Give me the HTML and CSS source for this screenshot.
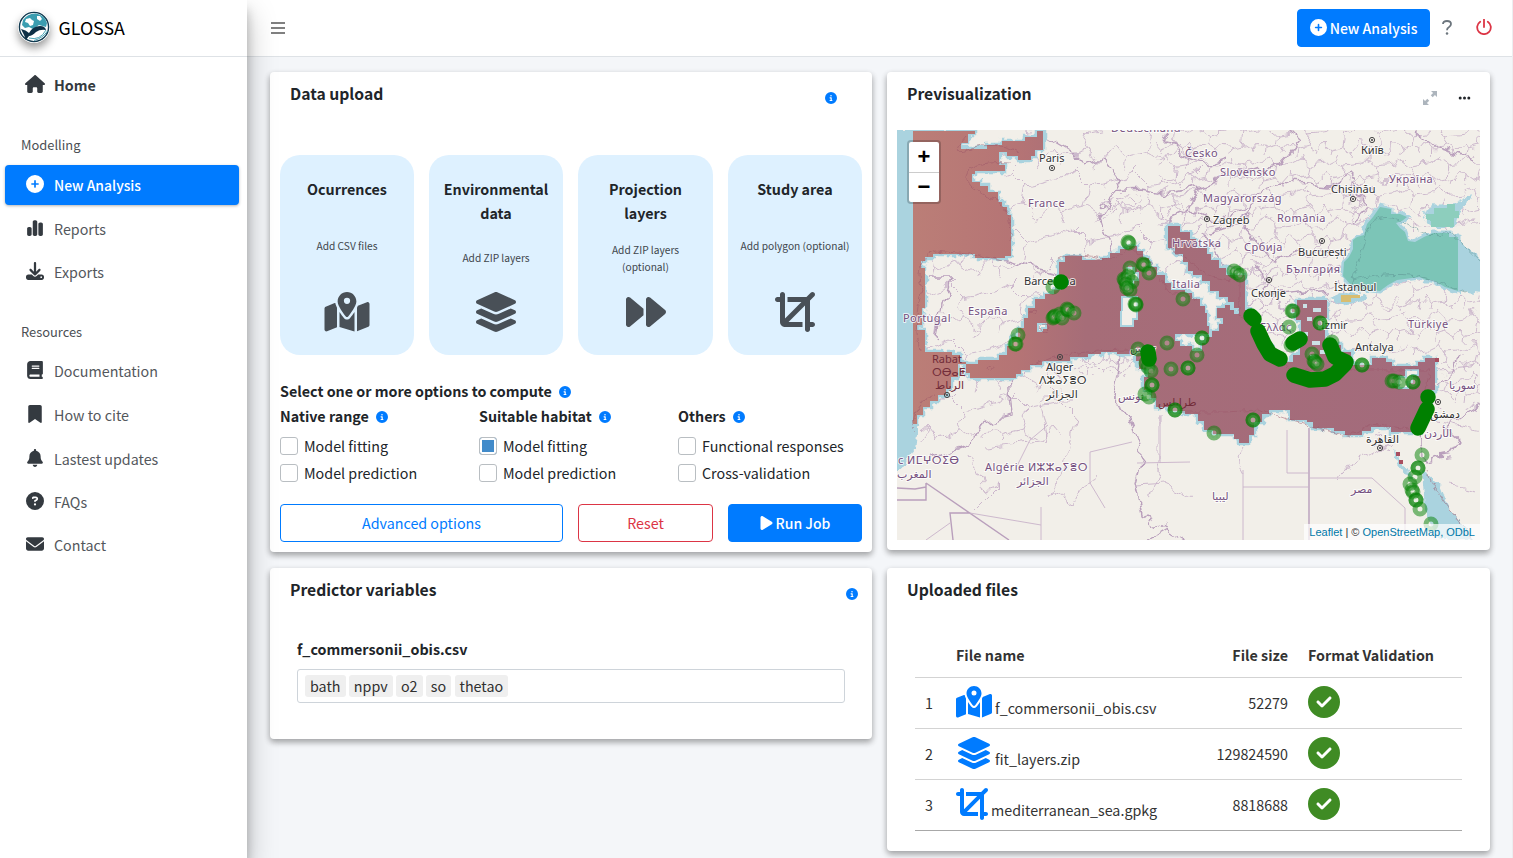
FILE: index.html
```html
<!DOCTYPE html>
<html lang="en">
<head>
<meta charset="utf-8">
<title>GLOSSA</title>
<link rel="stylesheet" href="styles.css">
</head>
<body>
<svg class="sprite" width="0" height="0">
<symbol id="house" viewBox="0 0 576 512"><path d="M575.8 255.5c0 18-15 32.1-32 32.1h-32l.7 160.2c0 2.7-.2 5.4-.5 8.1V472c0 22.1-17.9 40-40 40H456c-1.1 0-2.2 0-3.3-.1c-1.4 .1-2.8 .1-4.2 .1H416 392c-22.1 0-40-17.9-40-40V448 384c0-17.7-14.3-32-32-32H256c-17.7 0-32 14.3-32 32v64 24c0 22.1-17.9 40-40 40H160 128.1c-1.5 0-3-.1-4.5-.2c-1.2 .1-2.4 .2-3.6 .2H104c-22.1 0-40-17.9-40-40V360c0-.9 0-1.9 .1-2.8V287.6H32c-18 0-32-14-32-32.1c0-9 3-17 10-24L266.4 8c7-7 15-8 22-8s15 2 21 7L564.8 231.5c8 7 12 15 11 24z"/></symbol>
<symbol id="plus" viewBox="0 0 512 512"><path d="M256 512A256 256 0 1 0 256 0a256 256 0 1 0 0 512zM232 344V280H168c-13.3 0-24-10.7-24-24s10.7-24 24-24h64V168c0-13.3 10.7-24 24-24s24 10.7 24 24v64h64c13.3 0 24 10.7 24 24s-10.7 24-24 24H280v64c0 13.3-10.7 24-24 24s-24-10.7-24-24z"/></symbol>
<symbol id="chart" viewBox="0 0 448 512"><path d="M160 80c0-26.500 21.500-48 48-48h32c26.500 0 48 21.500 48 48V432c0 26.500-21.500 48-48 48H208c-26.500 0-48-21.500-48-48V80zM0 272c0-26.500 21.500-48 48-48H80c26.500 0 48 21.500 48 48V432c0 26.500-21.500 48-48 48H48c-26.500 0-48-21.500-48-48V272zM368 96h32c26.500 0 48 21.500 48 48V432c0 26.500-21.500 48-48 48H368c-26.500 0-48-21.500-48-48V144c0-26.500 21.500-48 48-48z"/></symbol>
<symbol id="download" viewBox="0 0 512 512"><path d="M288 32c0-17.700-14.300-32-32-32s-32 14.300-32 32V274.700l-73.400-73.400c-12.500-12.500-32.800-12.500-45.300 0s-12.500 32.800 0 45.300l128 128c12.500 12.500 32.800 12.500 45.300 0l128-128c12.500-12.500 12.500-32.800 0-45.300s-32.800-12.500-45.300 0L288 274.700V32zM64 352c-35.300 0-64 28.700-64 64v32c0 35.300 28.700 64 64 64H448c35.300 0 64-28.700 64-64V416c0-35.300-28.700-64-64-64H346.500l-45.300 45.300c-25 25-65.500 25-90.500 0L165.500 352H64zm368 56a24 24 0 1 1 0 48 24 24 0 1 1 0-48z"/></symbol>
<symbol id="book" viewBox="0 0 448 512"><path d="M96 0C43 0 0 43 0 96V416c0 53 43 96 96 96H384h32c17.700 0 32-14.300 32-32s-14.300-32-32-32V384c17.700 0 32-14.300 32-32V32c0-17.700-14.300-32-32-32H384 96zm0 384H352v64H96c-17.700 0-32-14.300-32-32s14.300-32 32-32zm32-240c0-8.800 7.200-16 16-16H336c8.800 0 16 7.200 16 16s-7.200 16-16 16H144c-8.800 0-16-7.200-16-16zm16 48H336c8.800 0 16 7.200 16 16s-7.200 16-16 16H144c-8.800 0-16-7.200-16-16s7.200-16 16-16z"/></symbol>
<symbol id="bookmark" viewBox="0 0 384 512"><path d="M0 48V487.700C0 501.100 10.900 512 24.300 512c5 0 9.900-1.500 14-4.400L192 400 345.700 507.600c4.100 2.900 9 4.400 14 4.400c13.400 0 24.300-10.900 24.300-24.300V48c0-26.500-21.500-48-48-48H48C21.500 0 0 21.500 0 48z"/></symbol>
<symbol id="bell" viewBox="0 0 448 512"><path d="M224 0c-17.700 0-32 14.300-32 32V51.200C119 66 64 130.600 64 208v18.800c0 47-17.300 92.400-48.500 127.600l-7.400 8.300c-8.400 9.400-10.400 22.900-5.300 34.400S19.400 416 32 416H416c12.600 0 24-7.400 29.200-18.900s3.100-25-5.300-34.400l-7.400-8.300C401.300 319.200 384 273.900 384 226.800V208c0-77.400-55-142-128-156.800V32c0-17.700-14.300-32-32-32zm45.300 493.300c12-12 18.700-28.300 18.700-45.300H224 160c0 17 6.700 33.300 18.700 45.300s28.300 18.700 45.300 18.700s33.300-6.700 45.300-18.700z"/></symbol>
<symbol id="faq" viewBox="0 0 512 512"><path d="M256 512A256 256 0 1 0 256 0a256 256 0 1 0 0 512zM169.800 165.300c7.900-22.300 29.100-37.300 52.800-37.300h58.300c34.900 0 63.100 28.300 63.100 63.100c0 22.600-12.100 43.500-31.700 54.800L280 264.400c-.2 13-10.900 23.600-24 23.600c-13.300 0-24-10.700-24-24V250.500c0-8.600 4.600-16.500 12.100-20.800l44.300-25.400c4.700-2.700 7.600-7.700 7.600-13.100c0-8.400-6.800-15.100-15.100-15.100H222.600c-3.400 0-6.400 2.100-7.500 5.300l-.4 1.200c-4.400 12.500-18.200 19-30.600 14.600s-19-18.200-14.600-30.600l.4-1.200zM224 352a32 32 0 1 1 64 0 32 32 0 1 1-64 0z"/></symbol>
<symbol id="envelope" viewBox="0 0 512 512"><path d="M48 64C21.500 64 0 85.500 0 112c0 15.100 7.100 29.300 19.200 38.400L236.800 313.600c11.400 8.500 27 8.500 38.400 0L492.800 150.400c12.100-9.100 19.200-23.300 19.200-38.400c0-26.500-21.500-48-48-48H48zM0 176V384c0 35.300 28.700 64 64 64H448c35.300 0 64-28.700 64-64V176L294.400 339.200c-22.800 17.100-54 17.100-76.800 0L0 176z"/></symbol>
<symbol id="info" viewBox="0 0 512 512"><path d="M256 512A256 256 0 1 0 256 0a256 256 0 1 0 0 512zM216 336h24V272H216c-13.300 0-24-10.700-24-24s10.700-24 24-24h48c13.300 0 24 10.700 24 24v88h8c13.300 0 24 10.700 24 24s-10.700 24-24 24H216c-13.300 0-24-10.700-24-24s10.700-24 24-24zm40-208a32 32 0 1 1 0 64 32 32 0 1 1 0-64z"/></symbol>
<symbol id="mapdot" viewBox="0 0 576 512"><path d="M408 120c0 54.600-73.100 151.900-105.200 192c-7.700 9.600-22 9.600-29.600 0C241.100 271.900 168 174.600 168 120C168 53.700 221.700 0 288 0s120 53.700 120 120zm8 80.400c3.500-6.900 6.700-13.800 9.600-20.600c.5-1.200 1-2.500 1.500-3.700l116-46.400C558.900 123.400 576 135 576 152V422.800c0 9.800-6 18.600-15.100 22.300L416 503V200.400zM137.600 138.300c2.400 14.100 7.200 28.300 12.800 41.500c2.900 6.800 6.100 13.700 9.600 20.600V451.800L32.900 502.700C17.100 509 0 497.400 0 480.400V209.600c0-9.800 6-18.600 15.100-22.300l122.600-49zM327.800 332c13.900-17.400 35.700-45.700 56.200-77V504.300L192 449.400V255c20.500 31.300 42.300 59.600 56.200 77c20.500 25.600 59.100 25.600 79.600 0zM288 152a40 40 0 1 0 0-80 40 40 0 1 0 0 80z"/></symbol>
<symbol id="layers" viewBox="0 0 576 512"><path d="M264.500 5.200c14.900-6.900 32.100-6.900 47 0l218.600 101c8.500 3.900 13.900 12.400 13.900 21.800s-5.400 17.900-13.900 21.800l-218.600 101c-14.900 6.900-32.100 6.900-47 0L45.900 149.800C37.400 145.800 32 137.300 32 128s5.400-17.900 13.900-21.800L264.500 5.200zM476.900 209.600l53.200 24.600c8.500 3.900 13.900 12.400 13.900 21.800s-5.400 17.900-13.900 21.800l-218.600 101c-14.900 6.900-32.100 6.900-47 0L45.900 277.800C37.400 273.800 32 265.300 32 256s5.400-17.900 13.900-21.800l53.200-24.600 152 70.200c23.400 10.800 50.400 10.800 73.800 0l152-70.200zm-152 198.200l152-70.200 53.200 24.600c8.500 3.900 13.900 12.400 13.900 21.800s-5.400 17.900-13.900 21.800l-218.600 101c-14.900 6.900-32.100 6.900-47 0L45.900 405.800C37.400 401.800 32 393.300 32 384s5.400-17.900 13.900-21.800l53.200-24.600 152 70.200c23.400 10.800 50.400 10.800 73.800 0z"/></symbol>
<symbol id="forward" viewBox="0 0 512 512"><path d="M52.500 440.600c-9.500 7.900-22.800 9.700-34.100 4.400S0 428.400 0 416V96C0 83.600 7.200 72.300 18.400 67s24.500-3.600 34.100 4.400L224 214.300V256v41.700L52.500 440.600zM256 352V256 128 96c0-12.400 7.200-23.700 18.400-29s24.500-3.600 34.100 4.400l192 160c7.300 6.100 11.500 15.100 11.500 24.600s-4.200 18.500-11.500 24.600l-192 160c-9.500 7.900-22.800 9.700-34.100 4.400s-18.400-16.600-18.400-29V352z"/></symbol>
<symbol id="crop" viewBox="0 0 512 512"><path d="M448 109.300l54.600-54.600c12.500-12.500 12.500-32.800 0-45.300s-32.800-12.500-45.300 0L402.700 64H160v64H338.700L128 338.700V32c0-17.700-14.300-32-32-32S64 14.300 64 32V64H32C14.300 64 0 78.300 0 96s14.300 32 32 32H64V384c0 35.300 28.700 64 64 64H352V384H173.300L384 173.300V480c0 17.700 14.300 32 32 32s32-14.300 32-32V448h32c17.700 0 32-14.300 32-32s-14.300-32-32-32H448V109.300z"/></symbol>
<symbol id="play" viewBox="0 0 384 512"><path d="M73 39c-14.800-9.100-33.400-9.400-48.500-.9S0 62.600 0 80V432c0 17.400 9.400 33.400 24.500 41.900s33.700 8.100 48.500-.9L361 297c14.300-8.700 23-24.200 23-41s-8.700-32.200-23-41L73 39z"/></symbol>
<symbol id="check" viewBox="0 0 512 512"><path d="M256 512A256 256 0 1 0 256 0a256 256 0 1 0 0 512zM369 209L241 337c-9.400 9.400-24.600 9.400-33.900 0l-64-64c-9.400-9.400-9.400-24.600 0-33.900s24.600-9.400 33.900 0l47 47L335 175c9.400-9.400 24.600-9.400 33.900 0s9.400 24.600 0 33.900z"/></symbol>
</svg>
<div class="app">
<aside class="sidebar">
  <div class="brand">
    <svg class="logo" viewBox="0 0 32 32"><circle cx="16" cy="16" r="16" fill="#fff"/><circle cx="16" cy="16" r="14.600" fill="#fff" stroke="#123a50" stroke-width="1.400"/><path d="M5 9Q10 2 18 2.500Q27 4 29 12L28 16L21 14L15 18L11 16L7 17L4 14Z" fill="#3b9db0"/><path d="M8 8l4-1 2 2 2 1-1 4-3 1-2-3-3-1zM19 5l3 0 2 3-2 2-3-2z" fill="#fff"/><path d="M3 18Q8 19 11 22Q15 15 22 15Q27 15 28 19Q22 18 18 21Q14 25 11 25L8 29L6 24Z" fill="#0e3046"/><path d="M14 24.500Q21 24 24 19.500Q27 20 25 23Q21 27 14 24.500Z" fill="#fff"/><path d="M11 27Q22 30 28 19M16 29.500Q25 27 29.500 20" fill="none" stroke="#3b9db0" stroke-width=".9"/></svg>
    <span>GLOSSA</span>
  </div>
  <nav>
    <a class="item home"><svg class="ic w20"><use href="#house"/></svg>Home</a>
    <div class="group">Modelling</div>
    <a class="item active"><svg class="ic"><use href="#plus"/></svg>New Analysis</a>
    <a class="item"><svg class="ic"><use href="#chart"/></svg>Reports</a>
    <a class="item"><svg class="ic"><use href="#download"/></svg>Exports</a>
    <div class="group second">Resources</div>
    <a class="item doc"><svg class="ic"><use href="#book"/></svg>Documentation</a>
    <a class="item"><svg class="ic"><use href="#bookmark"/></svg>How to cite</a>
    <a class="item"><svg class="ic"><use href="#bell"/></svg>Lastest updates</a>
    <a class="item"><svg class="ic"><use href="#faq"/></svg>FAQs</a>
    <a class="item"><svg class="ic"><use href="#envelope"/></svg>Contact</a>
  </nav>
</aside>
<div class="page">
  <header class="topbar">
    <svg class="burger" viewBox="0 0 14 12"><path d="M0 1H14M0 6H14M0 11H14" stroke="#808080" stroke-width="2" shape-rendering="crispEdges"/></svg>
    <button class="btn primary new"><svg><use href="#plus"/></svg>New Analysis</button>
    <svg class="help" viewBox="0 0 10 15"><path d="M1 4Q1 1 5 1Q9 1 9 4Q9 6 6.800 7.300Q5 8.300 5 10.300" fill="none" stroke="#6c757d" stroke-width="1.800"/><circle cx="5" cy="13.400" r="1.250" fill="#6c757d"/></svg>
    <svg class="power" viewBox="0 0 16 16"><path d="M4.200 2.700A6.800 6.800 0 1 0 11.800 2.700M8 .5V8" fill="none" stroke="#dc3545" stroke-width="1.800" stroke-linecap="round"/></svg>
  </header>
  <main>
    <div class="col left">
      <section class="card upload">
        <div class="head"><h3>Data upload</h3><svg class="info i1"><use href="#info"/></svg></div>
        <div class="tiles">
          <div class="tile"><h4>Ocurrences</h4><p>Add CSV files</p><svg class="w45"><use href="#mapdot"/></svg></div>
          <div class="tile two"><h4>Environmental data</h4><p>Add ZIP layers</p><svg class="w45"><use href="#layers"/></svg></div>
          <div class="tile two wrap"><h4>Projection<br>layers</h4><p>Add ZIP layers<br>(optional)</p><svg><use href="#forward"/></svg></div>
          <div class="tile"><h4>Study area</h4><p>Add polygon (optional)</p><svg><use href="#crop"/></svg></div>
        </div>
        <div class="opt-title">Select one or more options to compute<svg class="info"><use href="#info"/></svg></div>
        <div class="options">
          <div><h5>Native range<svg class="info"><use href="#info"/></svg></h5><label><i></i>Model fitting</label><label><i></i>Model prediction</label></div>
          <div><h5>Suitable habitat<svg class="info"><use href="#info"/></svg></h5><label><i class="on"></i>Model fitting</label><label><i></i>Model prediction</label></div>
          <div><h5>Others<svg class="info"><use href="#info"/></svg></h5><label><i></i>Functional responses</label><label><i></i>Cross-validation</label></div>
        </div>
        <div class="actions"><button class="btn adv">Advanced options</button><button class="btn reset">Reset</button><button class="btn primary run"><svg><use href="#play"/></svg>Run Job</button></div>
      </section>
      <section class="card predictors">
        <div class="head"><h3>Predictor variables</h3><svg class="info"><use href="#info"/></svg></div>
        <div class="pv"><h5>f_commersonii_obis.csv</h5><div class="tags"><span>bath</span><span>nppv</span><span>o2</span><span>so</span><span>thetao</span></div></div>
      </section>
    </div>
    <div class="col">
      <section class="card preview">
        <div class="head"><h3>Previsualization</h3>
          <svg class="expand" viewBox="0 0 14 14"><path d="M8 0H14V6L11.900 3.900 9.700 6.200 7.800 4.300 10.100 2.100ZM6 14H0V8L2.100 10.100 4.300 7.800 6.200 9.700 3.900 11.900Z" fill="#adb5bd"/></svg>
          <svg class="dots" viewBox="0 0 12 4"><circle cx="1.700" cy="2" r="1.500"/><circle cx="6" cy="2" r="1.500"/><circle cx="10.300" cy="2" r="1.500"/></svg>
        </div>
        <div class="map">
<svg class="mapsvg" viewBox="897 130 583 410">
<defs>
<filter id="wiggle" x="0" y="0" width="1" height="1"><feTurbulence type="fractalNoise" baseFrequency=".07" numOctaves="2" seed="4"/><feDisplacementMap in="SourceGraphic" scale="16" xChannelSelector="R" yChannelSelector="G"/></filter>
<filter id="coast" x="0" y="0" width="1" height="1"><feTurbulence type="fractalNoise" baseFrequency=".16" numOctaves="2" seed="9"/><feDisplacementMap in="SourceGraphic" scale="7" xChannelSelector="R" yChannelSelector="G"/></filter>
<pattern id="big" width="62" height="56" patternUnits="userSpaceOnUse"><path d="M0 12L20 4L34 18L62 12M34 18L30 38L8 44L0 34M30 38L48 50L62 34M48 50L44 56M20 4L24 0M8 44L6 56" class="minor"/></pattern>
<pattern id="small" width="34" height="31" patternUnits="userSpaceOnUse"><path d="M0 8L10 3L19 10L34 8M19 10L17 21L5 24L0 18M17 21L26 27L34 18M26 27L25 31M10 3L12 0M5 24L4 31" class="minor"/></pattern>
<pattern id="tiny" width="15" height="14" patternUnits="userSpaceOnUse"><path d="M0 4L5 1L9 5L15 4M9 5L8 10L2 11L0 8M8 10L13 12L15 8M2 11V14M5 1V0" class="minor"/></pattern>
<linearGradient id="sea" gradientUnits="userSpaceOnUse" x1="913" y1="0" x2="1435" y2="0"><stop offset="0" stop-color="#bb7e77"/><stop offset=".2" stop-color="#b57475"/><stop offset=".33" stop-color="#a66d78"/><stop offset="1" stop-color="#a36b7c"/></linearGradient>
<path id="med" d="M913 131H975V134H968V143H961V149H987V145H1002V141H1025V137H1037V131H1043V150H1035V156H1031V160H1018V156H1007V152H999V165H1005V171H975V174H972V182H980V186H988V192H998V202H1002V207H1007V215H1011V256H1005V258H975V254H933V257H925V261H921V268H925V308H922V325H917V330H925V352H952V355H960V362H966V364H978V360H999V355H1007V346H1012V337H1018V328H1024V318H1028V308H1035V299H1045V294H1054V290H1061V280H1059V262H1065V256H1082V260H1102V258H1110V253H1120V249H1129V246H1137V251H1143V258H1149V267H1157V275H1165V283H1171V290H1185V293H1192V299H1200V306H1205V313H1207V326H1209V334H1175V341H1180V346H1192V351H1202V343H1206V337H1212V331H1219V324H1223V318H1217V308H1225V305H1230V310H1234V314H1239V308H1234V302H1228V297H1219V291H1210V281H1202V275H1193V271H1188V262H1183V254H1175V248H1168V226H1180V232H1190V239H1196V248H1207V254H1211V260H1219V268H1226V275H1245V310H1250V320H1258V334H1263V346H1271V355H1280V362H1293V355H1300V344H1304V335H1301V320H1296V312H1292V307H1297V300H1327V318H1322V328H1325V340H1331V345H1341V352H1351V365H1372V358H1386V362H1392V366H1418V362H1425V358H1435V390H1431V408H1425V422H1420V432H1391V427H1371V431H1362V435H1345V431H1334V428H1313V422H1307V420H1290V410H1269V414H1262V422H1254V435H1249V443H1239V439H1234V434H1213V430H1204V421H1198V414H1185V411H1168V407H1156V398H1151V390H1144V377H1148V369H1139V361H1136V354H1117V352H1101V354H1088V357H1070V361H1042V365H1030V370H1021V374H1016V378H970V373H966V364H958V377H951V389H946V395H938V401H930V407H923V415H917V424H913Z"/>
<path id="blackpath" d="M1380 207L1391 209V214L1400 214L1407 217L1402 221L1396 223L1400 228L1405 232L1408 241L1415 242L1424 237L1433 233H1449V237H1458V291L1445 287L1433 280H1426L1420 277L1397 280L1388 285L1380 291L1360 289L1350 284L1343 276L1344 262L1349 257L1353 249V240L1357 237L1364 235L1367 224L1373 217Z"/>
</defs>
<rect x="897" y="130" width="583" height="410" fill="#f2efe9"/>
<g filter="url(#wiggle)" fill="none">
<path d="M1000 120H1200V300H1060V440H900V250H1010Z" fill="url(#big)"/>
<path d="M1155 120H1500V230H1390L1340 310H1230L1160 220Z" fill="url(#small)"/>
<path d="M1330 285L1500 270V410H1440V355H1330ZM1240 300H1300V365H1270Z" fill="url(#small)"/>
<path d="M1102 193H1142V213H1102ZM1252 262H1275V282H1252ZM1350 180H1364V225H1348ZM1075 355H1130V374H1075ZM1375 432H1396V450H1375Z" fill="url(#tiny)"/>
<g class="major"><path d="M1045 135L1070 150L1085 165L1105 160L1120 180L1112 195L1100 213L1107 235L1115 258M1110 190L1140 188L1170 193L1200 187L1240 172L1280 165L1300 140L1285 125M1005 258L1035 268L1060 274M928 280H950L943 305L936 340M1165 135L1180 155L1205 165L1225 158M1200 187L1190 208L1165 220M1190 208L1220 223L1250 200L1280 182L1330 186L1350 175L1365 210L1354 225M1250 200L1240 222L1260 246L1273 263L1295 250L1350 247M1210 231L1240 225M1205 232L1220 258L1240 275M1255 265L1268 280L1260 296L1280 295L1330 290M1415 130L1440 150L1475 160M1120 355L1113 394L1130 420L1142 455L1135 482L1142 515L1165 530L1140 545M1165 530L1190 545M1009 378L1012 415L985 422L970 443L930 458M1418 437L1425 460L1450 455L1460 440L1445 428L1480 405M1435 385L1450 370L1460 355"/></g>
<g class="minor"><path d="M1075 400H1040L1048 440L985 447M1050 390L1075 415L1065 465L1050 495M970 455L985 490L1000 485L975 510M1050 490L1075 505L1095 470M1160 415V463L1150 500M1243 445L1235 460L1243 475M1340 478L1350 465L1385 445M1135 485L1165 483L1190 495M1450 485L1480 490M1440 370L1480 365M1430 420L1480 430"/></g>
</g>
<g class="major"><path d="M926 483L1009 540M897 500H926V483M897 488L915 489 926 487M970 513H950L953 540M1309 428V540"/></g>
<g class="minor"><path d="M970 513L1041 525V540M950 523L926 540M1041 525V507M1090 452L1132 442M1090 452V483L1105 508M1160 415V463M1137 463L1190 462M1243 470V540M1243 487H1309M1287 430V473H1309M1309 478H1372L1405 508V540M1048 425L1030 440 1015 470"/></g>
<g filter="url(#coast)">
<path d="M897 130H917V434L915 450 900 470H897Z" fill="#aad3df"/>
<use href="#med" fill="none" stroke="#aad3df" stroke-width="4.500"/><use href="#blackpath" fill="none" stroke="#aad3df" stroke-width="5"/>
<path d="M1455 236L1468 248 1482 259V294L1455 290ZM1422 213L1435 205 1455 203 1472 195 1468 202 1459 212 1455 227H1430ZM1422 470L1440 485 1450 510 1475 540H1438L1425 510ZM1393 448L1402 463 1413 478 1410 480 1398 465ZM1330 299L1345 292 1368 296 1360 302 1340 305Z" fill="#aad3df"/>
</g>
<rect x="897" y="130" width="5" height="330" fill="#aad3df"/>
<use href="#blackpath" fill="#7cc5b7"/>
<g shape-rendering="crispEdges">
<use href="#med" fill="url(#sea)"/>
<path d="M1426 219V214H1434V208H1447V204H1455V211H1459V218H1454V227H1431V221Z" fill="#8dcebd"/>
<path d="M1341 295H1360V298H1351V302H1341Z" fill="#d8bd70"/>
<path d="M1127 268H1134V273H1138V280H1133V285H1127ZM1122 297H1137V319H1133V326H1121ZM1038 324H1046V328H1042V331H1038ZM1406 370H1418V375H1412V382H1408V388H1399V377H1406Z" fill="#f2efe9" stroke="#aad3df" stroke-width="2"/>
<path d="M1303 304h4v4h-4zM1313 308h8v4h-8zM1307 317h5v4h-5zM1318 325h6v4h-6zM1303 332h5v4h-5zM1312 341h8v4h-8zM1320 350h6v4h-6zM1310 355h5v4h-5z" fill="#cce0e6"/>
<path d="M1396 452h4v4h-4zM1399 460h4v4h-4zM1435 358h4v4h-4z" fill="#a84e60"/>
</g>
<g class="marine" filter="url(#coast)"><path d="M967 136Q948 158 970 149Q998 140 1018 152M1010 163Q963 160 966 180Q974 193 998 200Q1012 213 1011 240M920 350Q912 320 922 290Q912 262 935 251Q970 253 1003 260M1057 260Q1072 250 1110 260L1130 248 1148 260 1168 291 1197 300M935 395Q915 400 912 430M1030 366Q1060 350 1135 350M1170 248Q1190 260 1200 270T1240 280V315L1290 370 1430 370 1418 430 1370 424 1350 437 1290 420 1260 410 1225 412H1180M1425 470Q1440 500 1475 542"/><path class="teal" d="M1350 290Q1355 270 1370 224Q1385 210 1410 226Q1428 240 1450 232L1480 260M1352 280Q1400 270 1425 278L1465 292"/><circle cx="990" cy="368" r="3"/><circle cx="1033" cy="312" r="3"/><circle cx="1044" cy="328" r="4"/></g>
<g class="city"><text x="1039" y="162">Paris</text><text x="1024" y="285">Barcelona</text><text x="1213" y="224">Zagreb</text><text x="1361" y="154">Київ</text><text x="1331" y="193">Chișinău</text><text x="1298" y="256">București</text><text x="1251" y="297">Скопје</text><text x="1334" y="291">İstanbul</text><text x="1321" y="329">İzmir</text><text x="1355" y="351">Antalya</text><text class="rabat" x="932" y="363">Rabat</text><text class="rabat" x="932" y="376">ⵔⴱⴰⵟ</text><text class="rabat" x="935" y="389">الرباط</text><text x="1046" y="371">Alger</text><text x="1039" y="384">ⴷⵣⴰⵢⴻⵔ</text><text x="1046" y="398">الجزائر</text><text x="1366" y="443">القاهرة</text><text x="1430" y="418">دمشق</text><text x="1130" y="352">تونس</text></g>
<g class="country"><text x="1111" y="132">Deutschland</text><text x="1028" y="207">France</text><text x="968" y="315">España</text><text x="903" y="322">Portugal</text><text x="1185" y="157">Česko</text><text x="1220" y="176">Slovensko</text><text x="1203" y="202">Magyarország</text><text x="1172" y="247">Hrvatska</text><text x="1172" y="288">Italia</text><text x="1244" y="251">Србија</text><text x="1277" y="222">România</text><text x="1286" y="273">България</text><text x="1389" y="183">Україна</text><text x="1408" y="328">Türkiye</text><text x="1260" y="331">Ελλάς</text><text x="985" y="471">Algérie ⵍⵣⵣⴰⵢⴻⵔ</text><text x="1017" y="485">الجزائر</text><text x="898" y="464">c ⵍⵎⵖⵔⵉⴱ</text><text x="897" y="478">المغرب</text><text x="1118" y="400">تونس</text><text class="red" x="1158" y="406">طرابلس</text><text x="1212" y="500">ليبيا</text><text x="1351" y="493">مصر</text><text x="1449" y="389">سوريا</text><text x="1424" y="437">الأردن</text></g>
<g class="capital"><circle cx="1052" cy="168" r="2.600"/><circle cx="1207" cy="219" r="2.600"/><circle cx="1372" cy="140" r="2.600"/><circle cx="1353" cy="199" r="2.600"/><circle cx="1322" cy="241" r="2.600"/><circle cx="1269" cy="280" r="2.600"/><circle cx="947" cy="395" r="2.600"/><circle cx="1060" cy="357" r="2.600"/><circle cx="1380" cy="448" r="2.600"/><circle cx="1438" cy="402" r="2.600"/><path d="M1052 168h.01M1207 219h.01M1372 140h.01M1353 199h.01M1322 241h.01M1269 280h.01M947 395h.01M1060 357h.01M1380 448h.01M1438 402h.01"/></g>
<defs><circle id="m" r="5"/></defs>
<g class="marks">
<use href="#m" x="1128" y="242"/><use href="#m" x="1129" y="243"/><use href="#m" x="1143" y="264"/><use href="#m" x="1144" y="265"/><use href="#m" x="1149" y="273"/><use href="#m" x="1130" y="268"/><use href="#m" x="1124" y="279"/><use href="#m" x="1125" y="280"/><use href="#m" x="1128" y="276"/><use href="#m" x="1132" y="282"/><use href="#m" x="1126" y="284"/><use href="#m" x="1130" y="290"/><use href="#m" x="1127" y="288"/><use href="#m" x="1135" y="304"/><use href="#m" x="1136" y="305"/><use href="#m" x="1136" y="304"/>
<use href="#m" x="1053" y="287"/><use href="#m" x="1053" y="318"/><use href="#m" x="1054" y="317"/><use href="#m" x="1055" y="316"/><use href="#m" x="1060" y="314"/><use href="#m" x="1062" y="318"/><use href="#m" x="1067" y="309"/><use href="#m" x="1068" y="310"/><use href="#m" x="1074" y="313"/><use href="#m" x="1018" y="335"/><use href="#m" x="1015" y="344"/><use href="#m" x="1016" y="344"/><use href="#m" x="1183" y="299"/><use href="#m" x="1167" y="343"/><use href="#m" x="1202" y="338"/><use href="#m" x="1202" y="338"/><use href="#m" x="1197" y="355"/><use href="#m" x="1188" y="368"/><use href="#m" x="1188" y="368"/><use href="#m" x="1171" y="369"/><use href="#m" x="1138" y="349"/><use href="#m" x="1146" y="363"/><use href="#m" x="1148" y="367"/><use href="#m" x="1151" y="371"/><use href="#m" x="1152" y="385"/><use href="#m" x="1152" y="385"/><use href="#m" x="1145" y="394"/><use href="#m" x="1149" y="397"/><use href="#m" x="1175" y="410"/><use href="#m" x="1175" y="410"/><use href="#m" x="1214" y="433"/><use href="#m" x="1253" y="420"/><use href="#m" x="1253" y="420"/>
<use href="#m" x="1234" y="271"/><use href="#m" x="1237" y="273"/><use href="#m" x="1240" y="275"/><use href="#m" x="1292" y="311"/><use href="#m" x="1293" y="311"/><use href="#m" x="1289" y="327"/><use href="#m" x="1320" y="323"/><use href="#m" x="1320" y="323"/><use href="#m" x="1291" y="345"/><use href="#m" x="1312" y="354"/><use href="#m" x="1314" y="361"/><use href="#m" x="1315" y="362"/><use href="#m" x="1317" y="364"/><use href="#m" x="1332" y="342"/><use href="#m" x="1362" y="365"/><use href="#m" x="1362" y="365"/><use href="#m" x="1392" y="381"/><use href="#m" x="1394" y="381"/><use href="#m" x="1399" y="382"/><use href="#m" x="1413" y="382"/><use href="#m" x="1413" y="382"/><use href="#m" x="1422" y="455"/><use href="#m" x="1418" y="468"/><use href="#m" x="1418" y="468"/><use href="#m" x="1415" y="477"/><use href="#m" x="1410" y="484"/><use href="#m" x="1412" y="490"/><use href="#m" x="1413" y="492"/><use href="#m" x="1416" y="500"/><use href="#m" x="1416" y="500"/><use href="#m" x="1420" y="509"/><use href="#m" x="1431" y="524"/>
</g>
<g class="cluster"><path d="M1061 282h.01M1251 316L1254 319M1258 331L1264 344L1270 354L1280 359M1148 352L1149 359M1293 343L1300 339M1294 375L1310 380L1325 379L1335 374L1345 364M1330 345L1335 357L1346 362M1427 409L1418 428M1428 397h.01"/></g>
</svg>
          <div class="zoom"><span>+</span><span>−</span></div>
          <div class="attr"><a>Leaflet</a> | © <a>OpenStreetMap, ODbL</a></div>
        </div>
      </section>
      <section class="card files">
        <div class="head"><h3>Uploaded files</h3></div>
        <table>
          <thead><tr><th class="n"></th><th>File name</th><th class="size">File size</th><th class="valid">Format Validation</th></tr></thead>
          <tbody>
          <tr><td class="n">1</td><td><div class="fname"><svg class="w36"><use href="#mapdot"/></svg><span>f_commersonii_obis.csv</span></div></td><td class="size">52279</td><td class="valid"><svg><use href="#check"/></svg></td></tr>
          <tr><td class="n">2</td><td><div class="fname"><svg class="w36"><use href="#layers"/></svg><span>fit_layers.zip</span></div></td><td class="size">129824590</td><td class="valid"><svg><use href="#check"/></svg></td></tr>
          <tr><td class="n">3</td><td><div class="fname"><svg><use href="#crop"/></svg><span>mediterranean_sea.gpkg</span></div></td><td class="size">8818688</td><td class="valid"><svg><use href="#check"/></svg></td></tr>
          </tbody>
        </table>
      </section>
    </div>
  </main>
</div>
</div>
</body>
</html>
```
FILE: styles.css
```css
* { box-sizing: border-box; }
body { margin: 0; background: #f4f6f9; color: #212529; font: 14.3px/24px "Noto Sans CJK SC", "Noto Sans", sans-serif; overflow: hidden; }
svg { fill: currentColor; flex: none; }
.sprite { position: absolute; }
h3, h4, h5, p { margin: 0; }
.app { display: flex; height: 858px; border-right: 1px solid #eceef0; }
.sidebar { width: 247px; flex: none; background: #fff; z-index: 2; box-shadow: 0 14px 28px rgba(0,0,0,.25), 0 10px 10px rgba(0,0,0,.22); }
.brand { height: 57px; border-bottom: 1px solid #dee2e6; display: flex; align-items: center; padding: 0 0 2px 18px; font-size: 17.8px; color: #000; gap: 8.5px; }
.logo { width: 32px; height: 32px; border-radius: 50%; margin-top: -1px; box-shadow: 0 5px 9px rgba(0,0,0,.4); }
nav { padding: 8px 8px 0 5px; display: flex; flex-direction: column; gap: 3.2px; }
.item { height: 40px; display: flex; align-items: center; padding-left: 20px; gap: 9px; color: #53575c; border-radius: 4px; }
.item .ic { width: 20px; height: 18px; color: #343a40; margin-top: -2px; }
.home { font-weight: bold; color: #343a40; margin-bottom: 25px; }
.active { background: #007bff; color: #fff; font-size: 13.9px; font-weight: 500; box-shadow: 0 1px 3px rgba(0,0,0,.3); margin-top: 5px; }
.item.active { color: #fff; }
.active .ic { color: #fff; }
.group { font-size: 12.9px; color: #4b4f54; padding-left: 16px; height: 24px; margin-top: 0; }
.second { margin: 25px 0 4px; }
.doc { margin-bottom: 1px; }
.page { flex: 1; min-width: 0; }
.topbar { height: 57px; background: #fff; border-bottom: 1px solid #dee2e6; display: flex; align-items: center; padding: 0 20px 1px 24px; }
.burger { width: 14px; height: 12px; }
.btn { font: inherit; display: flex; align-items: center; justify-content: center; height: 38px; border-radius: 4px; border: 1px solid; background: #fff; padding: 0; }
.primary { background: #007bff; color: #fff; border-color: #007bff; font-weight: 500; font-size: 14px; gap: 3px; }
.new { width: 133px; margin-left: auto; }
.new svg { width: 17px; height: 17px; margin-top: -1px; }
.help { width: 10px; height: 15px; margin-left: 12px; margin-top: -1px; }
.power { width: 16px; height: 16px; margin-left: 24px; margin-top: -2px; }
main { display: flex; gap: 15px; align-items: flex-start; padding: 15px 22px 0 23px; }
.col { flex: 1; min-width: 0; display: flex; flex-direction: column; gap: 16px; }
.col.left { flex: none; width: 602px; }
.card { background: #fff; border-radius: 4px; box-shadow: 0 3px 6px rgba(0,0,0,.16), 0 3px 6px rgba(0,0,0,.23); }
.head { display: flex; align-items: center; padding-left: 20px; height: 44px; }
h3 { font-size: 15.7px; font-weight: bold; margin-right: auto; }
.info { width: 12px; height: 12px; color: #007bff; }
.head .info { margin: 7px 14px 0 0; }
.head .i1 { margin-right: 35px; }
.upload { height: 480px; padding: 0 10px; }
.upload .head { padding-left: 10px; margin-right: -10px; }
.tiles { display: grid; grid-template-columns: 134px 134px 135px 134px; gap: 15px; margin-top: 39px; }
.tile { height: 200px; border-radius: 20px; background: #def1ff; padding-top: 22px; display: flex; flex-direction: column; align-items: center; text-align: center; }
.tile h4 { font-size: 14.3px; height: 60px; }
.tile p { font-size: 10.2px; line-height: 17px; color: #40464c; height: 55px; white-space: nowrap; }
.tile.two h4 { height: 72px; }
.tile.two p { height: 43px; }
.tile.wrap h4 { height: 64px; }
.tile.wrap p { height: 51px; }
.tile svg { width: 40px; height: 40px; color: #495057; }
.tile svg.w45 { width: 46px; }
.opt-title, h5 { font-size: 14.3px; font-weight: bold; display: flex; align-items: center; gap: 7px; }
.opt-title { margin-top: 24px; height: 24px; }
.opt-title .info, h5 .info { margin-top: 2px; }
.options { display: flex; margin-top: 1px; height: 88px; }
.options > div { width: 199px; flex: none; }
.options > div:last-child { width: 184px; }
.options h5 { margin-bottom: 6px; }
label { display: flex; align-items: center; gap: 6px; height: 24px; margin-bottom: 3px; white-space: nowrap; }
label i { width: 18px; height: 18px; border: 1px solid #b9bec2; border-radius: 3px; margin-top: -1px; }
label i.on { background: #428bca; box-shadow: inset 0 0 0 2px #fff; }
.actions { display: grid; grid-template-columns: 283px 135px 134px; gap: 15px; margin-top: 12px; }
.adv { color: #007bff; }
.reset { color: #dc3545; }
.run svg { width: 13px; height: 16px; margin-top: -1px; }
.predictors { height: 171px; }
.pv { padding: 25px 27px 0; }
.tags { margin-top: 8px; border: 1px solid #ced4da; border-radius: 3px; height: 34px; display: flex; align-items: center; gap: 3.3px; padding-left: 7px; }
.tags span { background: #efefef; padding: 0 5px; height: 22px; line-height: 22px; border-radius: 3px; color: #303030; }
.preview { height: 478px; }
.expand { width: 14px; height: 14px; margin-top: 7px; }
.dots { width: 13px; height: 4px; margin: 7px 19px 0 21px; }
.map { margin: 14px 10px 0; height: 410px; position: relative; overflow: hidden; }
.mapsvg { display: block; width: 583px; height: 410px; }
.minor { fill: none; stroke: #c8b2ca; stroke-width: .9; }
.major { fill: none; stroke: #b99fbc; stroke-width: 1.4; }
.marine { fill: none; stroke: #9b5568; stroke-width: 1; opacity: .5; }
.marine .teal { stroke: #5b8f8f; }
.city, .country { font: 11px "Noto Sans", "DejaVu Sans", sans-serif; fill: #333; stroke: #fff; stroke-opacity: .75; stroke-width: 2px; paint-order: stroke; stroke-linejoin: round; }
.country { fill: #755080; letter-spacing: .45px; }
.rabat, .red { fill: #732d3a; stroke: none; }
.capital { fill: none; stroke: #444; stroke-width: 1; }
.capital path { stroke-width: 2; stroke-linecap: round; }
.marks { fill: #dff0da; fill-opacity: .2; stroke: #008000; stroke-opacity: .5; stroke-width: 5; }
.cluster { fill: none; stroke: #008000; stroke-width: 15.5; stroke-linecap: round; stroke-linejoin: round; }
.zoom { position: absolute; left: 10px; top: 10px; border: 2px solid rgba(0,0,0,.2); border-radius: 4px; background-clip: padding-box; background-color: #fff; width: 34px; height: 64px; }
.zoom span { display: block; height: 30px; text-align: center; font: bold 22px/30px "Liberation Sans", sans-serif; color: #000; }
.zoom span + span { border-top: 1px solid #ccc; height: 30px; line-height: 28px; }
.attr { position: absolute; right: 0; bottom: 0; background: rgba(255,255,255,.7); font: 11px/16px "Liberation Sans", Arial, sans-serif; color: #333; padding: 0 5px; }
.attr a { color: #0078a8; }
.preview + .files { margin-top: 2px; }
.files { height: 283px; }
table { margin: 22px 28px 0; width: 547px; border-collapse: collapse; table-layout: fixed; color: #333; }
th { height: 43px; padding: 0; text-align: left; font-weight: bold; }
td { height: 51px; padding: 0; border-top: 1px solid #d3d3d3; }
thead { border-bottom: 1px solid #a8a8a8; }
tbody { border-bottom: 1px solid #a8a8a8; }
.n { width: 41px; padding-left: 10px; }
.size { width: 100px; text-align: right; }
th.valid { width: 174px; padding-left: 20px; }
td.valid { padding-left: 20px; color: #3f8b24; }
.valid svg { width: 32px; height: 32px; display: block; margin-top: -2px; }
.fname { display: flex; align-items: flex-end; gap: 3px; height: 36px; }
.fname svg { width: 32px; height: 32px; color: #007bff; margin-bottom: 3px; }
.fname svg.w36 { width: 36px; }
.fname span { height: 24px; margin-bottom: 1px; }
```
